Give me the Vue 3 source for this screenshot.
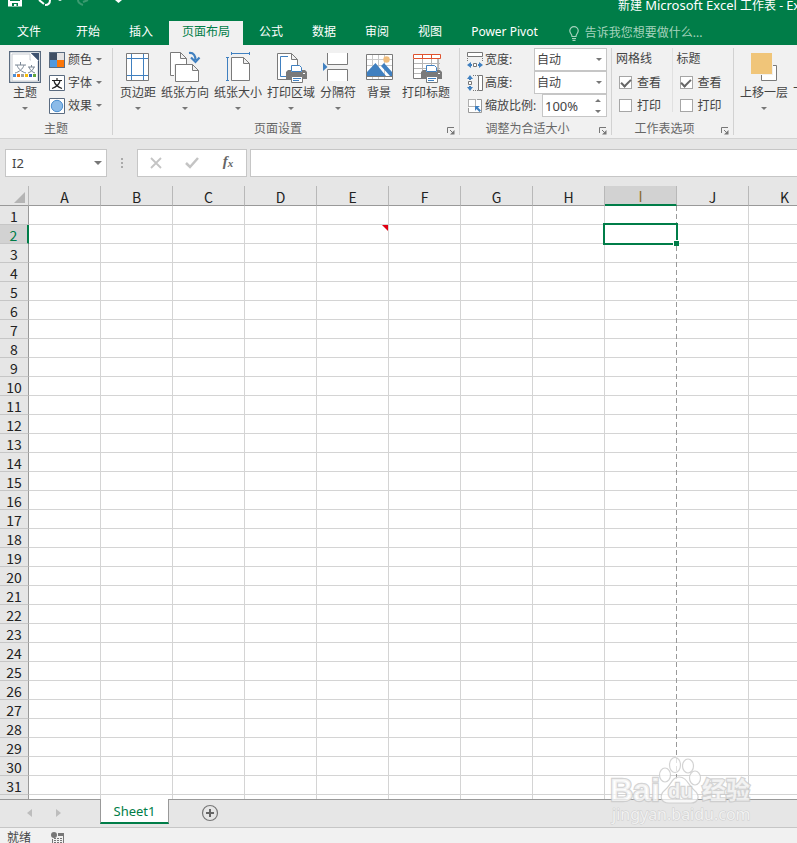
<script setup>
import { ref } from 'vue'

const columns = ['A', 'B', 'C', 'D', 'E', 'F', 'G', 'H', 'I', 'J', 'K']
const rows = Array.from({ length: 32 }, (_, i) => i + 1)
const tabsBefore = ['开始', '插入', '页面布局', '公式', '数据', '审阅', '视图', 'Power Pivot']
const activeTab = ref('页面布局')
const selected = { col: 'I', row: 2 }
const comment = { col: 'E', row: 2 }
const cellName = ref('I2')
const formula = ref('')
const scale = ref('100%')
const widthMode = ref('自动')
const heightMode = ref('自动')
const options = ref([
  { title: '网格线', id: 'grid', view: true, print: false },
  { title: '标题', id: 'head', view: true, print: false }
])
const isAt = (p, c, r) => p.col === c && p.row === r
</script>

<template>
  <div class="window">
    <svg class="defs" aria-hidden="true">
      <symbol id="printer" viewBox="0 0 21 19">
        <path d="M0 8l2-2h3v2h11V6h3l2 2v7H0z" fill="#7a7a7a" />
        <path d="M5.500 7.500v-6h8l2 2v4z" fill="#fff" stroke="#4080c0" />
        <path d="M4 8h13v2H4z" fill="#7a7a7a" />
        <rect x="17" y="9" width="2" height="1" fill="#fff" />
        <path d="M5.500 12.500h11v6h-11z" fill="#fff" stroke="#7a7a7a" />
        <path d="M7 14.500h8M7 16.500h6" stroke="#4080c0" />
      </symbol>
      <symbol id="down" viewBox="0 0 6 3"><path d="M0 0h6L3 3z" fill="#777" /></symbol>
      <symbol id="launcher" viewBox="0 0 8 8">
        <path d="M.5 6V.5H7M3 3l3 3" fill="none" stroke="#777" />
        <path d="M7.500 3v4.500H3z" fill="#777" />
      </symbol>
    </svg>

    <header class="titlebar">
      <div class="quick">
        <svg width="130" height="8" viewBox="0 0 130 8">
          <path d="M8 0h14v6.500H8z" fill="#fff" />
          <path d="M10 0h10v1H10zM12 3h6v3h-1.500V4H14v2h-2z" fill="#007d48" />
          <path d="M39 0l5 4M45 5c4 0 5-2 5-5" fill="none" stroke="#fff" stroke-width="2" />
          <path d="M58 0h4l-2 1z" fill="#fff" />
          <path d="M78 0c0 3 2 4 5 5M83 2l5-2" fill="none" stroke="#3b9a70" stroke-width="2" />
          <path d="M115 0h7l-3.500 3z" fill="#fff" />
        </svg>
      </div>
      <div class="title">新建 <span class="app">Microsoft Excel</span> 工作表 - <span class="app">Excel</span></div>
    </header>

    <nav class="tabs">
      <button class="tab file">文件</button>
      <button v-for="t in tabsBefore" :key="t" class="tab" :class="{ active: t === activeTab }" @click="activeTab = t">{{ t }}</button>
      <button class="tell">
        <svg width="10" height="15" viewBox="0 0 10 15"><path d="M3 10.500C3 8 .8 7.500.8 4.800a4.200 4.200 0 0 1 8.400 0C9.200 7.500 7 8 7 10.500zM3 12.500h4M3.500 14.300h3" fill="none" stroke="#a5d3bd" stroke-width="1.200" /></svg>
        告诉我您想要做什么...
      </button>
    </nav>

    <section class="ribbon">
      <div class="group g-theme">
        <div class="body">
          <button class="large">
            <svg class="icon" viewBox="0 0 32 32">
              <path d="M.5.500h31v31H.5z" fill="#fff" stroke="#5a6b80" stroke-width="1.500" />
              <path d="M3 3h18v6h8v21H3z" fill="#fff" stroke="#c8ccd2" />
              <path d="M22 2h8v28h-1V10h-7z" fill="#3e5270" /><path d="M22 2l8 8h-8z" fill="#fff" /><path d="M22 2l8 8V2z" fill="#3e5270" />
              <path d="M6 14h11M11.500 11v3M8 14c1 4 5 7 9 8M15 14c-1 4-5 7-9 8M19 16h7M22.500 14v2M20 16c1 3 3 5 6 6M25 16c-1 3-3 5-6 6" fill="none" stroke="#7c8896" />
              <path d="M4 23h3v3H4z" fill="#4d8fd6" /><path d="M8 23h3v3H8z" fill="#f57c14" /><path d="M12 23h3v3h-3z" fill="#a0a0a0" /><path d="M16 23h3v3h-3z" fill="#f7bd08" /><path d="M20 23h3v3h-3z" fill="#3b68c0" /><path d="M24 23h3v3h-3z" fill="#62a83e" />
            </svg>
            <span>主题</span><svg class="down"><use href="#down" /></svg>
          </button>
          <div class="stack">
            <button class="small">
              <svg width="16" height="16" viewBox="0 0 16 16"><path d="M0 0h16v16H0z" fill="#5a6b80" /><path d="M1 1h7v7H1z" fill="#3f4e63" /><path d="M8 1h7v7H8z" fill="#e4e2e2" /><path d="M1 8h7v7H1z" fill="#4f98df" /><path d="M8 8h7v7H8z" fill="#fb7609" /></svg>
              <span>颜色</span><svg class="down"><use href="#down" /></svg>
            </button>
            <button class="small">
              <svg width="16" height="16" viewBox="0 0 16 16"><path d="M.5.500h15v15H.5z" fill="#fff" stroke="#5a6b80" /><path d="M3 5.500h10M8 3v2.500M5 6c1 4 4 6 8 7.500M11 6c-1 4-4 6-8 7.500" fill="none" stroke="#222" stroke-width="1.200" /></svg>
              <span>字体</span><svg class="down"><use href="#down" /></svg>
            </button>
            <button class="small">
              <svg width="16" height="16" viewBox="0 0 16 16"><path d="M.5.500h15v15H.5z" fill="#fff" stroke="#5a6b80" /><circle cx="8" cy="8" r="5.700" fill="#8cbbe8" stroke="#4c8fd0" /></svg>
              <span>效果</span><svg class="down"><use href="#down" /></svg>
            </button>
          </div>
        </div>
        <div class="caption">主题</div>
      </div>

      <div class="group g-page">
        <div class="body">
          <button class="large">
            <svg class="icon" viewBox="0 0 32 32"><path d="M4.500 2.500h22v27h-22z" fill="#fff" stroke="#7a7a7a" /><path d="M9.500 3v26M21.500 3v26M5 7.500h21M5 24.500h21" stroke="#4080c0" /></svg>
            <span>页边距</span><svg class="down"><use href="#down" /></svg>
          </button>
          <button class="large">
            <svg class="icon" viewBox="0 0 32 32">
              <path d="M1.500 1.500h10l6 6v17h-16zM11.500 1.500v6h6" fill="#fff" stroke="#7a7a7a" />
              <path d="M5 13h27v19H5z" fill="#f1f1f1" /><path d="M6.500 13.500h17l6 6v11h-23zM23.500 13.500v6h6" fill="#fff" stroke="#7a7a7a" />
              <path d="M20 2c5-.5 6.500 3 6.500 7M22 6.500l4.500 4.500 4-4.500" fill="none" stroke="#4080c0" stroke-width="2.200" />
            </svg>
            <span>纸张方向</span><svg class="down"><use href="#down" /></svg>
          </button>
          <button class="large">
            <svg class="icon" viewBox="0 0 32 32"><path d="M9.500 6.500h12l6 6v17h-18zM21.500 6.500v6h6" fill="#fff" stroke="#7a7a7a" /><path d="M9.500 2.500h18M9.500 1v3M27.500 1v3M5.500 6.500v23M4 6.500h3M4 29.500h3" stroke="#4080c0" /></svg>
            <span>纸张大小</span><svg class="down"><use href="#down" /></svg>
          </button>
          <button class="large">
            <svg class="icon" viewBox="0 0 32 32"><path d="M2.500 2.500h14l6 6v20h-20zM16.500 2.500v6h6" fill="#fff" stroke="#7a7a7a" /><path d="M13 5.500H5.500v20H12" fill="none" stroke="#4080c0" /><use href="#printer" x="11" y="13" width="21" height="19" /></svg>
            <span>打印区域</span><svg class="down"><use href="#down" /></svg>
          </button>
          <button class="large">
            <svg class="icon" viewBox="0 0 32 32"><path d="M5.500 2v11.500h20V2M5.500 30V18.500h20V30" fill="#fff" stroke="#7a7a7a" /><path d="M1 11.500l4.500 4.500L1 20z" fill="#4080c0" /></svg>
            <span>分隔符</span><svg class="down"><use href="#down" /></svg>
          </button>
          <button class="large">
            <svg class="icon" viewBox="0 0 32 32"><path d="M3.500 3.500h26v25h-26z" fill="#fff" stroke="#7a7a7a" /><path d="M9.500 4v24M15.500 4v24M21.500 4v24M4 8.500h25M4 14.500h25" stroke="#c9c9c9" /><path d="M4 25v-4l8.500-9L23 25zM18 15l3-3 8 9v4h-2z" fill="#4080c0" /><circle cx="23.500" cy="8.500" r="3.200" fill="#f0bd7d" /><path d="M4 25.500h25" stroke="#7a7a7a" /></svg>
            <span>背景</span>
          </button>
          <button class="large">
            <svg class="icon" viewBox="0 0 32 32"><path d="M3.500 8v19.500H28V8" fill="#fff" stroke="#7a7a7a" /><path d="M4 12.500h26M4 17.500h26M4 22.500h26M12.500 8v19M21.500 8v19" stroke="#b5b5b5" /><path d="M3.500 3.500h27v4h-27zM12.500 3.500v4M21.500 3.500v4" fill="#fff" stroke="#e0532f" /><use href="#printer" x="11" y="13" width="21" height="19" /></svg>
            <span>打印标题</span>
          </button>
        </div>
        <div class="caption">页面设置<button class="launch" aria-label="页面设置"><svg><use href="#launcher" /></svg></button></div>
      </div>

      <div class="group g-fit">
        <div class="stack">
          <div class="field">
            <svg width="16" height="16" viewBox="0 0 16 16"><path d="M.5.500h15v4H.5z" fill="#fff" stroke="#777" /><path d="M.5 6v4M15.500 6v4" stroke="#777" stroke-dasharray="1 1" /><path d="M0 13l4-3v2h1v2H4v2zM16 13l-4-3v2h-1v2h1v2z" fill="#4080c0" /><path d="M6.500 11.500h3v3h-3z" fill="#fff" stroke="#777" /></svg>
            <label for="fit-width">宽度:</label>
            <span class="select"><select id="fit-width" v-model="widthMode"><option>自动</option></select><svg class="down"><use href="#down" /></svg></span>
          </div>
          <div class="field">
            <svg width="16" height="16" viewBox="0 0 16 16"><path d="M11.500.500h4v15h-4z" fill="#fff" stroke="#777" /><path d="M6 .5h5M6 15.500h5" stroke="#777" stroke-dasharray="1 1" /><path d="M3 0l3 4H4v1H2V4H0zM3 16l3-4H4v-1H2v1H0z" fill="#4080c0" /><path d="M1.500 6.500h3v3h-3z" fill="#fff" stroke="#777" /></svg>
            <label for="fit-height">高度:</label>
            <span class="select"><select id="fit-height" v-model="heightMode"><option>自动</option></select><svg class="down"><use href="#down" /></svg></span>
          </div>
          <div class="field">
            <svg width="16" height="16" viewBox="0 0 16 16"><path d="M10 1.500h4.500v13h-13V10" fill="#fff" stroke="#999" /><path d="M1.500 1.500h7v7h-7z" fill="#fff" stroke="#666" stroke-dasharray="1 1" /><path d="M8 8h5l-2 1.500 3 3-1.500 1.500-3-3L8 13z" fill="#4080c0" /></svg>
            <label for="fit-scale">缩放比例:</label>
            <span class="spin"><input id="fit-scale" v-model="scale" type="text"><svg width="6" height="14" viewBox="0 0 6 14"><path d="M0 3h6L3 0zM0 11h6l-3 3z" fill="#777" /></svg></span>
          </div>
        </div>
        <div class="caption">调整为合适大小<button class="launch" aria-label="调整为合适大小"><svg><use href="#launcher" /></svg></button></div>
      </div>

      <div class="group g-options">
        <div class="body">
          <div v-for="o in options" :key="o.id" class="option">
            <div class="option-title">{{ o.title }}</div>
            <label class="check"><input v-model="o.view" type="checkbox">查看</label>
            <label class="check"><input v-model="o.print" type="checkbox">打印</label>
          </div>
        </div>
        <div class="caption">工作表选项<button class="launch" aria-label="工作表选项"><svg><use href="#launcher" /></svg></button></div>
      </div>

      <div class="group g-arrange">
        <div class="body">
          <button class="large">
            <svg class="icon" viewBox="0 0 32 32"><path d="M13.500 14.500h15v15h-15z" fill="#fff" stroke="#7a7a7a" /><path d="M2 1h23v23H2z" fill="#f1f1f1" /><path d="M3 2h21v21H3z" fill="#f0c579" /></svg>
            <span>上移一层</span><svg class="down"><use href="#down" /></svg>
          </button>
          <button class="large"><span class="icon"></span><span>下移一层</span><svg class="down"><use href="#down" /></svg></button>
        </div>
      </div>
    </section>

    <section class="formulabar">
      <div class="namebox">
        <input v-model="cellName" type="text" aria-label="名称框">
        <svg width="8" height="4" viewBox="0 0 8 4"><path d="M0 0h8L4 4z" fill="#777" /></svg>
      </div>
      <svg class="grip" width="2" height="10" viewBox="0 0 2 10"><path d="M0 0h2v2H0zM0 4h2v2H0zM0 8h2v2H0z" fill="#aaa" /></svg>
      <div class="actions">
        <button aria-label="取消"><svg width="12" height="12" viewBox="0 0 12 12"><path d="M1 1l10 10M11 1L1 11" stroke="#c4c4c4" stroke-width="1.800" /></svg></button>
        <button aria-label="输入"><svg width="14" height="12" viewBox="0 0 14 12"><path d="M1 6l4 4 8-9" fill="none" stroke="#c4c4c4" stroke-width="2.500" /></svg></button>
        <button class="fx" aria-label="插入函数">f<sub>x</sub></button>
      </div>
      <input v-model="formula" class="formula" type="text" aria-label="编辑栏">
    </section>

    <main class="sheet">
      <table>
        <colgroup><col class="c-row"><col v-for="c in columns" :key="c" class="c-col"></colgroup>
        <thead>
          <tr>
            <th class="corner"><svg width="11" height="11" viewBox="0 0 11 11"><path d="M11 0v11H0z" fill="#b4b4b4" /></svg></th>
            <th v-for="c in columns" :key="c" scope="col" :class="{ on: c === selected.col }">{{ c }}<i v-if="c === selected.col" class="pagebreak"></i></th>
          </tr>
        </thead>
        <tbody>
          <tr v-for="r in rows" :key="r">
            <th scope="row" :class="{ on: r === selected.row }">{{ r }}</th>
            <td v-for="c in columns" :key="c" :class="{ edge: c === selected.col }">
              <span v-if="isAt(selected, c, r)" class="cursor"><i></i></span>
              <svg v-if="isAt(comment, c, r)" class="note" width="6" height="6" viewBox="0 0 6 6"><path d="M0 0h6v6z" fill="#e00012" /></svg>
            </td>
          </tr>
        </tbody>
      </table>
    </main>

    <footer class="sheetbar">
      <div class="arrows">
        <button aria-label="上一个"><svg width="5" height="8" viewBox="0 0 5 8"><path d="M5 0v8L0 4z" fill="#bdbdbd" /></svg></button>
        <button aria-label="下一个"><svg width="5" height="8" viewBox="0 0 5 8"><path d="M0 0v8l5-4z" fill="#bdbdbd" /></svg></button>
      </div>
      <button class="sheettab">Sheet1</button>
      <button class="add" aria-label="新工作表"><svg width="18" height="18" viewBox="0 0 18 18"><circle cx="9" cy="9" r="7.500" fill="none" stroke="#777" stroke-width="1.200" /><path d="M9 5v8M5 9h8" stroke="#666" stroke-width="2" /></svg></button>
    </footer>
    <div class="status">
      <span>就绪</span>
      <svg width="14" height="13" viewBox="0 0 14 13"><circle cx="3" cy="3" r="3" fill="#777" /><path d="M7 1h6v3H7z" fill="#777" /><path d="M1.500 7v5.500h11V4" fill="none" stroke="#777" /><path d="M3 6.500h8M3 8.500h8M3 10.500h8" stroke="#777" stroke-dasharray="2 1" /></svg>
    </div>

    <svg class="watermark" width="146" height="74" viewBox="0 0 146 74" aria-hidden="true">
      <g fill="#fff" fill-opacity=".7" stroke="#c8c8c8" stroke-opacity=".8" stroke-width="1.200">
        <ellipse cx="67" cy="10" rx="5.500" ry="7.500" /><ellipse cx="80" cy="11" rx="5.500" ry="7" /><ellipse cx="57" cy="20" rx="5.500" ry="7" /><ellipse cx="87" cy="23" rx="5.500" ry="7" />
        <path d="M71 22c8 0 9 8 15 13 7 6 4 13-3 13H61c-9 0-10-8-4-13 6-5 7-13 14-13z" />
        <g paint-order="stroke" stroke-width="2.400">
          <text class="wm-brand" x="2" y="46">Bai</text>
          <text class="wm-du" x="60" y="43">du</text>
          <text class="wm-cn" x="94" y="44">经验</text>
        </g>
        <text class="wm-url" x="4" y="65">jingyan.baidu.com</text>
      </g>
    </svg>
  </div>
</template>

<style>
body { margin: 0; }
</style>

<style scoped>
.window { position: relative; display: flex; flex-direction: column; height: 100vh; overflow: hidden; background: #fff; color: #444; font: 12px/16px "Noto Sans", "Noto Sans CJK SC", sans-serif; }
.window * { box-sizing: border-box; }
button, input, select { font: inherit; color: inherit; margin: 0; padding: 0; border: 0; background: none; outline: 0; border-radius: 0; white-space: nowrap; }
svg { display: block; flex: none; }
.defs { position: absolute; width: 0; height: 0; }
.down { width: 6px; height: 3px; }

.titlebar { display: grid; grid-template-columns: 618px 1fr; flex: none; height: 21px; background: #007d48; color: #fff; }
.title { overflow: hidden; white-space: nowrap; line-height: 10px; }
.app { font-size: 13px; }
.tabs { display: flex; gap: 3px; flex: none; height: 24px; overflow: hidden; background: #007d48; color: #fff; }
.tab { padding: 0 13px 2px; }
.tab.file { padding: 0 19px 2px 17px; }
.tab.active { background: #f1f1f1; color: #007d48; }
.tell { display: flex; align-items: center; gap: 6px; margin-left: 15px; color: #a5d3bd; }

.ribbon { display: flex; flex: none; overflow: hidden; padding: 3px 0; background: #f1f1f1; border-bottom: 1px solid #d2d2d2; }
.group { display: flex; flex-direction: column; flex: none; height: 87px; border-right: 1px solid #d2d2d2; }
.body { display: flex; }
.g-theme { width: 113px; padding-left: 9px; }
.g-page { width: 347px; padding-left: 7px; }
.g-page .body { gap: 5px; }
.g-fit { width: 152px; padding: 0 4px 0 7px; }
.g-options { width: 122px; padding-left: 4px; }
.g-arrange { border: 0; padding-left: 6px; }
.g-arrange .body { gap: 5px; }
.caption { position: relative; margin-top: auto; line-height: 12px; text-align: center; color: #666; }
.g-theme .caption { margin-left: -9px; }
.g-page .caption { margin-left: -23px; }
.g-fit .caption { margin: auto 12px 0 -7px; }
.g-options .caption { margin-right: 20px; }
.launch { position: absolute; right: 4px; bottom: 0; }
.launch svg { width: 8px; height: 8px; }
.g-fit .launch { right: -12px; }
.g-options .launch { right: -16px; }
.large { display: flex; flex-direction: column; align-items: center; min-width: 36px; padding-top: 3px; }
.large .icon { display: block; width: 32px; height: 32px; }
.large .down { margin-top: 4px; }
.g-theme .large { min-width: 32px; }
.large span { height: 20px; line-height: 20px; }
.stack { display: flex; flex-direction: column; }
.g-theme .stack { margin-left: 8px; }
.small { display: flex; align-items: center; height: 23px; gap: 3px; }
.small .down { margin-left: 1px; }
.field { display: flex; align-items: center; height: 23px; gap: 2px; }
.field label { white-space: nowrap; }
.select, .spin { position: relative; display: flex; align-items: center; margin-left: auto; height: 23px; background: #fff; border: 1px solid #c6c6c6; }
.select { width: 73px; }
.spin { width: 65px; }
.select select { appearance: none; width: 100%; height: 100%; padding-left: 2px; }
.select .down { position: absolute; right: 4px; pointer-events: none; }
.spin input { width: 48px; padding-left: 2px; font-size: 13px; }
.spin svg { margin-left: 4px; }
.option { width: 57px; }
.option:first-child { border-right: 1px solid #e0e0e0; margin-right: 4px; height: 64px; }
.option-title { height: 23px; line-height: 21px; }
.check { display: flex; align-items: center; gap: 5px; height: 23px; padding-left: 3px; }
.check input { appearance: none; display: grid; place-items: center; width: 13px; height: 13px; background: #fff; border: 1px solid #a6a6a6; }
.check input:checked::after { content: ""; width: 8px; height: 4px; border: solid #666; border-width: 0 0 2px 2px; transform: translateY(-1px) rotate(-45deg); }

.formulabar { display: flex; flex: none; align-items: center; height: 47px; padding: 1px 0 0 5px; background: #e6e6e6; }
.namebox, .actions, .formula { height: 28px; background: #fff; border: 1px solid #c6c6c6; }
.namebox { display: flex; align-items: center; width: 102px; padding: 0 5px 0 6px; font-size: 13px; }
.namebox input { width: 82px; flex: 1; }
.grip { margin: 0 14px; }
.actions { display: flex; align-items: center; width: 110px; margin-right: 3px; }
.actions button { display: flex; flex: 1; justify-content: center; }
.fx { font: italic bold 15px/18px "Liberation Serif", serif; color: #666; }
.fx sub { font-size: 11px; line-height: 22px; vertical-align: baseline; }
.formula { flex: 1; min-width: 0; border-right: 0; }

.sheet { flex: 1; min-height: 0; overflow: hidden; background: linear-gradient(#e6e6e6 18px, #fff 18px); font: 14px/16px "Noto Sans CJK SC", sans-serif; color: #222; }
table { table-layout: fixed; width: 821px; border-collapse: separate; border-spacing: 0; }
.c-row { width: 29px; }
.c-col { width: 72px; }
th, td { position: relative; height: 19px; padding: 0; font-weight: 400; border: solid #d4d4d4; border-width: 0 1px 1px 0; }
th { padding-top: 2px; background: #e6e6e6; }
thead th { height: 20px; border-color: #b8b8b8; border-bottom-color: #999; }
.corner svg { margin: 2px 0 0 14px; }
tbody th { border-color: #c6c6c6; border-right-color: #999; }
thead th.on { background: #d2d2d2; color: #8a6a2a; border-bottom: 2px solid #007d48; }
tbody th.on { background: #d2d2d2; color: #007d48; border-right: 2px solid #007d48; }
td.edge { border-right-color: #fff; }
.pagebreak { position: absolute; z-index: 1; top: 20px; left: 100%; width: 1px; height: 100vh; background: repeating-linear-gradient(#999 0 5px, transparent 5px 8px); }
.cursor { position: absolute; z-index: 2; inset: -2px; border: 2px solid #007d48; }
.cursor i { position: absolute; right: -3px; bottom: -3px; width: 6px; height: 6px; background: #007d48; border: solid #fff; border-width: 1px 0 0 1px; }
.note { position: absolute; top: 0; right: 0; }

.sheetbar { display: flex; flex: none; height: 28px; background: #e6e6e6; border-top: 1px solid #999; }
.arrows { display: flex; width: 100px; padding-left: 27px; gap: 24px; align-items: center; }
.arrows button { margin-bottom: 2px; }
.sheettab { width: 69px; height: 25px; margin-top: -1px; background: #fff; color: #007d48; font-size: 13px; border: solid #999; border-width: 0 1px; border-bottom: 2px solid #007d48; }
.add { margin: 0 0 2px 32px; }
.status { display: flex; flex: none; gap: 20px; height: 16px; padding: 2px 7px 0; overflow: hidden; background: #f1f1f1; border-top: 1px solid #c6c6c6; }
.status svg { margin-top: 2px; }
.watermark { position: absolute; z-index: 3; right: 43px; bottom: 14px; pointer-events: none; }
.wm-brand { font: bold 32px "Liberation Sans", sans-serif; }
.wm-du { font: bold 20px "Liberation Sans", sans-serif; }
.wm-cn { font: bold 24px "Noto Sans CJK SC", sans-serif; }
.wm-url { font: 16px "Noto Sans", sans-serif; stroke-width: 1px; paint-order: stroke; }
</style>
